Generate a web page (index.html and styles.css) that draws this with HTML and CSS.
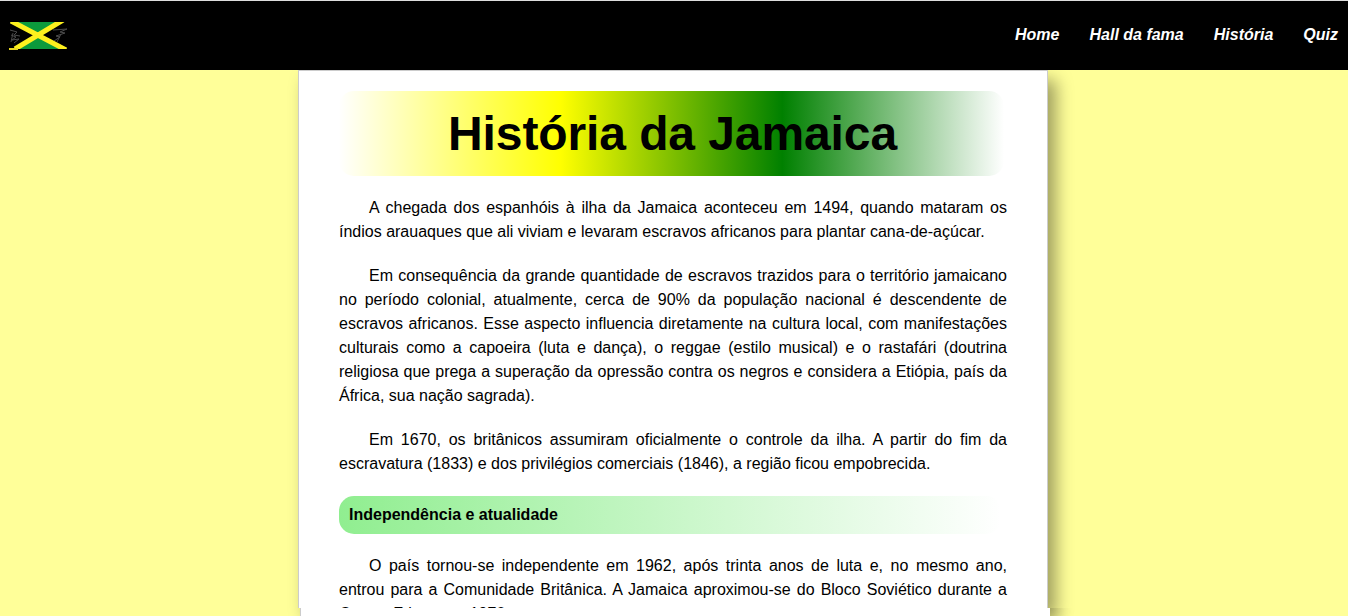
FILE: index.html
```html
<!DOCTYPE html>
<html lang="pt-BR">
<head>
<meta charset="utf-8">
<title>História da Jamaica</title>
<link rel="stylesheet" href="styles.css">
</head>
<body>
<header class="topbar">
  <a class="logo" href="#" aria-label="Jamaica">
    <svg width="60" height="33" viewBox="0 0 60 33" aria-hidden="true">
      <defs>
        <clipPath id="flag-edge"><rect x="0" y="3" width="60" height="27"/></clipPath>
      </defs>
      <g fill="none" stroke="#4a4a4a" stroke-width="1">
        <path d="M2 11l7 2-3 3 6 1M3 16l5 2-4 3 7-1-5 4M5 14l-2 9"/>
        <path d="M45 11l14-1-7 3 5 1-9 3 4 1-6 4M49 23l4-8"/>
      </g>
      <polygon points="9,3 55,3 31,16" fill="#0c9a3c"/>
      <polygon points="9,30 58,30 31,17" fill="#0c9a3c"/>
      <g clip-path="url(#flag-edge)">
        <path d="M3 2L58 31M55 1L7 30" fill="none" stroke="#fdf01e" stroke-width="5"/>
      </g>
      <path d="M1 30h9" stroke="#e8d820" stroke-width="2"/>
    </svg>
  </a>
  <nav class="menu">
    <a href="#">Home</a>
    <a href="#">Hall da fama</a>
    <a href="#">História</a>
    <a href="#">Quiz</a>
  </nav>
</header>
<main class="sheet">
  <h1 class="title">História da Jamaica</h1>
  <p>A chegada dos espanhóis à ilha da Jamaica aconteceu em 1494, quando mataram os índios arauaques que ali viviam e levaram escravos africanos para plantar cana-de-açúcar.</p>
  <p>Em consequência da grande quantidade de escravos trazidos para o território jamaicano no período colonial, atualmente, cerca de 90% da população nacional é descendente de escravos africanos. Esse aspecto influencia diretamente na cultura local, com manifestações culturais como a capoeira (luta e dança), o reggae (estilo musical) e o rastafári (doutrina religiosa que prega a superação da opressão contra os negros e considera a Etiópia, país da África, sua nação sagrada).</p>
  <p>Em 1670, os britânicos assumiram oficialmente o controle da ilha. A partir do fim da escravatura (1833) e dos privilégios comerciais (1846), a região ficou empobrecida.</p>
  <h2 class="subtitle">Independência e atualidade</h2>
  <p>O país tornou-se independente em 1962, após trinta anos de luta e, no mesmo ano, entrou para a Comunidade Britânica. A Jamaica aproximou-se do Bloco Soviético durante a Guerra Fria e, em 1970.</p>
</main>
<div class="sheet-end"></div>
</body>
</html>
```
FILE: styles.css
```css
html, body {
  margin: 0;
  height: 616px;
  overflow: hidden;
}
body {
  background: #ffff99;
  font-family: "Liberation Sans", Arial, sans-serif;
  color: #000;
}
.topbar {
  height: 69px;
  background: #000;
  border-top: 1px solid #ddd;
  display: flex;
  align-items: center;
  justify-content: space-between;
  padding: 0 10px 0 8px;
}
.logo {
  display: flex;
  width: 60px;
  height: 33px;
}
.menu {
  display: flex;
  gap: 30px;
  padding-bottom: 2px;
}
.menu a {
  color: #fff;
  font-size: 16px;
  font-weight: bold;
  font-style: italic;
  text-decoration: none;
}
.sheet {
  box-sizing: border-box;
  width: 750px;
  height: 538px;
  margin-left: 298px;
  padding: 20px 40px 0;
  background: #fff;
  border: 1px solid #ccc;
  border-bottom: 0;
  box-shadow: 8px 10px 16px rgba(0, 0, 0, 0.38);
  overflow: hidden;
}
.title {
  margin: 0 3px 20px 0;
  padding-left: 2px;
  height: 85px;
  line-height: 85px;
  font-size: 48px;
  font-weight: bold;
  letter-spacing: -0.1px;
  text-align: center;
  border-radius: 15px;
  background: linear-gradient(to right, #fff, #ff0, #008000, #fff);
}
.sheet p {
  margin: 0 0 20px;
  font-size: 16px;
  line-height: 24px;
  text-indent: 30px;
  text-align: justify;
}
.subtitle {
  margin: 0 6px 20px 0;
  padding-left: 10px;
  height: 38px;
  line-height: 38px;
  font-size: 16px;
  font-weight: bold;
  border-radius: 15px;
  background: linear-gradient(to right, #90ee90, #fff);
}
.sheet-end {
  box-sizing: border-box;
  width: 750px;
  height: 8px;
  margin-left: 300px;
  background: #fff;
  border-left: 1px solid #ccc;
  box-shadow: 8px 0 16px rgba(0, 0, 0, 0.38);
  clip-path: inset(0 -24px 0 0);
}
```
